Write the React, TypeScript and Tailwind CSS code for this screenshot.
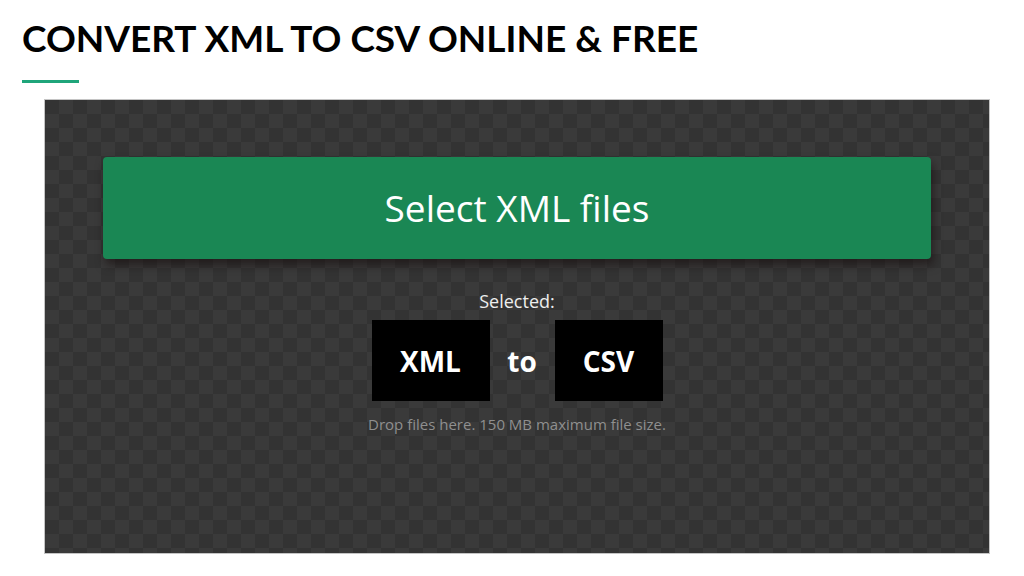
import React from 'react';

const App = () => {
  return (
    <div className="w-[1024px] h-[576px] bg-white overflow-hidden">
      <div className="pl-[22px] pt-[18px]">
        <h1 className="font-['Lato','Liberation_Sans',sans-serif] font-bold text-[37px] leading-[40px] text-black">
          CONVERT XML TO CSV ONLINE &amp; FREE
        </h1>
        <div className="mt-[22px] w-[57px] h-[3px] bg-[#1fa57a]" />
      </div>

      <div className="ml-[44px] mt-[16px] w-[946px] h-[455px] border border-[#c4c4c4] bg-[repeating-conic-gradient(#3a3a3a_0_25%,#333333_0_50%)] bg-size-[28px_28px] flex flex-col items-center font-['Open_Sans','Liberation_Sans',sans-serif]">
        <button className="mt-[57px] w-[828px] h-[102px] rounded-[4px] bg-[#1a8754] text-white text-[37px] shadow-[2px_6px_10px_rgba(20,10,10,0.55)]">
          Select XML files
        </button>

        <div className="mt-[30px] text-[#eeeeee] text-[18px] font-medium leading-[24px]">Selected:</div>

        <div className="mt-[7px] flex items-center">
          <div className="w-[118px] h-[81px] bg-black flex items-center justify-center text-white text-[28px] font-bold">XML</div>
          <div className="w-[65px] text-center text-white text-[28px] font-bold">to</div>
          <div className="w-[108px] h-[81px] bg-black flex items-center justify-center text-white text-[28px] font-bold">CSV</div>
        </div>

        <div className="mt-[13px] text-[#8f8f8f] text-[15px] leading-[20px]">
          Drop files here. 150 MB maximum file size.
        </div>
      </div>
    </div>
  );
};

export default App;
